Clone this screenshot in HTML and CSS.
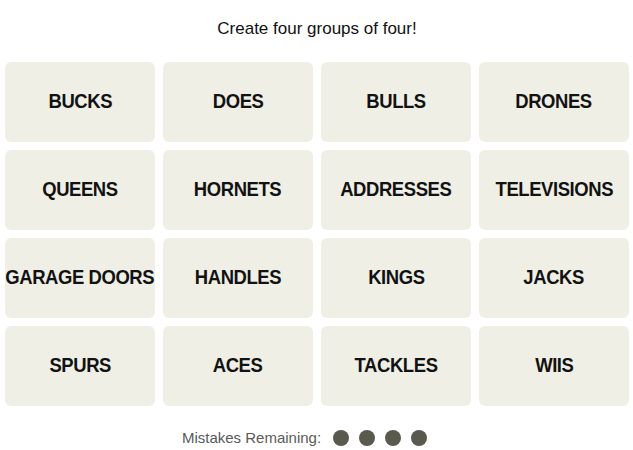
FILE: index.html
```html
<!DOCTYPE html>
<html>
<head>
<meta charset="utf-8">
<link rel="stylesheet" href="styles.css">
</head>
<body>
<div class="game">
  <p class="prompt">Create four groups of four!</p>
  <div class="board">
    <div class="tile"><span class="word">BUCKS</span></div>
    <div class="tile"><span class="word">DOES</span></div>
    <div class="tile"><span class="word">BULLS</span></div>
    <div class="tile"><span class="word">DRONES</span></div>
    <div class="tile"><span class="word">QUEENS</span></div>
    <div class="tile"><span class="word">HORNETS</span></div>
    <div class="tile"><span class="word">ADDRESSES</span></div>
    <div class="tile"><span class="word">TELEVISIONS</span></div>
    <div class="tile"><span class="word">GARAGE DOORS</span></div>
    <div class="tile"><span class="word">HANDLES</span></div>
    <div class="tile"><span class="word">KINGS</span></div>
    <div class="tile"><span class="word">JACKS</span></div>
    <div class="tile"><span class="word">SPURS</span></div>
    <div class="tile"><span class="word">ACES</span></div>
    <div class="tile"><span class="word">TACKLES</span></div>
    <div class="tile"><span class="word">WIIS</span></div>
  </div>
  <div class="mistakes">
    <span class="label">Mistakes Remaining:</span>
    <span class="dots"><span class="dot"></span><span class="dot"></span><span class="dot"></span><span class="dot"></span></span>
  </div>
</div>
</body>
</html>
```
FILE: styles.css
```css
html, body {
  margin: 0;
  padding: 0;
  background: #ffffff;
}
.game {
  width: 633px;
  padding: 0 4px 0 5px;
  box-sizing: border-box;
  font-family: "Liberation Sans", Arial, sans-serif;
}
.prompt {
  margin: 0;
  padding-top: 18px;
  height: 44px;
  box-sizing: border-box;
  text-align: center;
  font-size: 17px;
  color: #121212;
  line-height: 21px;
}
.board {
  display: grid;
  grid-template-columns: repeat(4, 150px);
  grid-auto-rows: 80px;
  gap: 8px;
  margin-top: 18px;
}
.tile {
  background: #efefe6;
  border-radius: 6px;
  display: flex;
  align-items: center;
  justify-content: center;
  color: #121212;
  white-space: nowrap;
}
.word {
  display: inline-block;
  font-weight: bold;
  font-size: 20.5px;
  letter-spacing: -0.45px;
  transform: translateY(-1.5px) scaleX(0.9);
}
.mistakes {
  display: flex;
  justify-content: center;
  align-items: center;
  margin-top: 23px;
  padding-right: 25px;
  gap: 12px;
}
.label {
  font-size: 15px;
  color: #5a5a5a;
}
.dots {
  display: flex;
  gap: 10px;
}
.dot {
  width: 16px;
  height: 16px;
  border-radius: 50%;
  background: #5a594e;
}
```
